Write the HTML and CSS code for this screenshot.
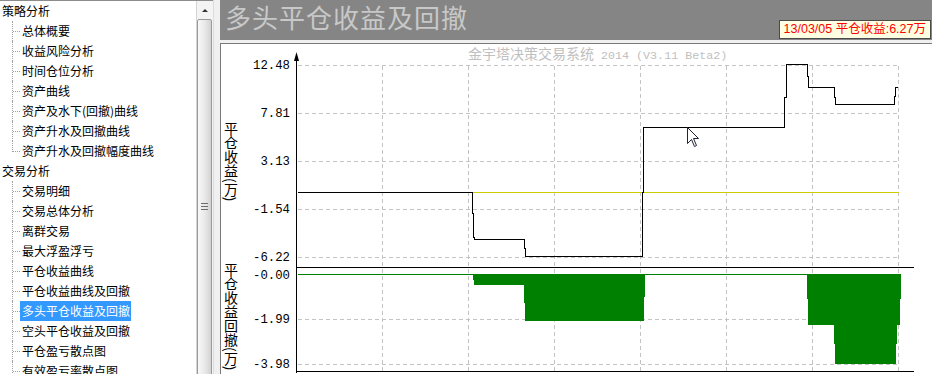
FILE: index.html
```html
<!DOCTYPE html>
<html lang="zh-CN">
<head>
  <meta charset="UTF-8">
  <title>多头平仓收益及回撤</title>
  <link rel="stylesheet" href="styles.css">
</head>
<body>

  <div class="app">
    <!-- Report tree -->
    <aside class="sidebar">
      <ul class="tree">
        <li class="group">策略分析</li>
        <li class="leaf"><span>总体概要</span></li>
        <li class="leaf"><span>收益风险分析</span></li>
        <li class="leaf"><span>时间仓位分析</span></li>
        <li class="leaf"><span>资产曲线</span></li>
        <li class="leaf"><span>资产及水下(回撤)曲线</span></li>
        <li class="leaf"><span>资产升水及回撤曲线</span></li>
        <li class="leaf last"><span>资产升水及回撤幅度曲线</span></li>
        <li class="group">交易分析</li>
        <li class="leaf"><span>交易明细</span></li>
        <li class="leaf"><span>交易总体分析</span></li>
        <li class="leaf"><span>离群交易</span></li>
        <li class="leaf"><span>最大浮盈浮亏</span></li>
        <li class="leaf"><span>平仓收益曲线</span></li>
        <li class="leaf"><span>平仓收益曲线及回撤</span></li>
        <li class="leaf active"><span>多头平仓收益及回撤</span></li>
        <li class="leaf"><span>空头平仓收益及回撤</span></li>
        <li class="leaf"><span>平仓盈亏散点图</span></li>
        <li class="leaf"><span>有效盈亏率散点图</span></li>
      </ul>
      <div class="scrollbar">
        <div class="scroll-up"></div>
        <div class="scroll-thumb"><span class="grip"></span></div>
      </div>
    </aside>

    <div class="splitter"></div>

    <!-- Report view -->
    <main class="report">
      <header class="report-title">
        <h1>多头平仓收益及回撤</h1>
        <div class="tip">13/03/05 平仓收益:6.27万</div>
      </header>

      <section class="chart-panel">
        <svg class="chart" width="711" height="330" viewBox="221 44 711 330">
          <text class="watermark" x="468" y="59">金宇塔决策交易系统<tspan class="latin"> 2014 (V3.11 Beta2)</tspan></text>

          <!-- grid -->
          <g transform="translate(.5 .5)">
            <path class="grid" d="M297 65H898M297 113H898M297 161H898M297 209H898M297 257H898M297 319H898M297 364H898"/>
            <path class="grid" d="M382 65V374M468 65V374M554 65V374M640 65V374M726 65V374M812 65V374M898 65V374"/>
          </g>

          <!-- drawdown fills -->
          <polygon class="dd" points="473,274 645,274 645,297 644,297 644,321 525,321 525,303 524,303 524,285 474,285 474,280 473,280"/>
          <polygon class="dd" points="807,274 901,274 901,299 900,299 900,325 897,325 897,344 896,344 896,364 835,364 835,344 834,344 834,325 808,325 808,299 807,299"/>

          <g transform="translate(.5 .5)">
            <path class="zero" d="M297 192H898"/>
            <path class="dd-line" d="M297 274H900"/>
            <path class="axis" d="M296 56V372M296 267H913M296 371H913"/>
            <path class="curve" d="M297 192H472V213H473V237H474V239H524V248H525V256H642V192H643V127H784V97H786V64H807V76H808V87H834V97H835V104H894V96H895V87H897"/>
          </g>
          <polygon points="296.5,52 294,61 299,61"/>

          <!-- tick labels -->
          <text class="tick" x="290" y="69">12.48</text>
          <text class="tick" x="290" y="117">7.81</text>
          <text class="tick" x="290" y="165">3.13</text>
          <text class="tick" x="290" y="213">-1.54</text>
          <text class="tick" x="290" y="261">-6.22</text>
          <text class="tick" x="290" y="279">-0.00</text>
          <text class="tick" x="290" y="323">-1.99</text>
          <text class="tick" x="290" y="368">-3.98</text>

          <text class="axis-title" x="231" y="122">平仓收益(万)</text>
          <text class="axis-title" x="231" y="263">平仓收益回撤(万)</text>

          <!-- mouse pointer -->
          <path class="pointer" transform="translate(687.5 127.5)" d="M0 0V16L4 12L7 19L9 18L6 11H11Z"/>
        </svg>
      </section>
    </main>
  </div>

</body>
</html>
```

FILE: styles.css
```css
body {
  margin: 0;
  background: #f0f0f0;
  font-family: "Noto Sans CJK SC", sans-serif;
}
.app {
  display: flex;
  width: 932px;
  height: 374px;
  overflow: hidden;
}

/* tree */
.sidebar {
  display: flex;
  width: 213px;
  border-top: 1px solid #8c8c8c;
  background: #fff;
  overflow: hidden;
}
.tree {
  list-style: none;
  margin: 0;
  padding: 0;
  width: 196px;
  font-size: 12px;
  line-height: 20px;
}
.tree li {
  height: 20px;
  white-space: nowrap;
}
.group {
  padding-left: 2px;
}
.leaf {
  display: flex;
  padding-left: 12px;
}
.leaf::before {
  content: '';
  width: 8px;
  box-sizing: border-box;
  border-left: 1px dotted #a0a0a0;
  background: linear-gradient(to right, #a0a0a0 50%, transparent 50%) 0 10px / 2px 1px repeat-x;
}
.leaf.last::before {
  height: 11px;
}
.leaf span {
  padding: 0 1px 0 2px;
}
.leaf.active span {
  background: #3399ff;
  color: #fff;
}

.scrollbar {
  width: 16px;
  border-left: 1px solid #d4d4d4;
  background: #f4f4f4;
  display: flex;
  flex-direction: column;
  overflow: hidden;
}
.scroll-up {
  flex: none;
  height: 18px;
  display: flex;
  align-items: center;
  justify-content: center;
}
.scroll-up::before {
  content: '';
  border-left: 3px solid transparent;
  border-right: 3px solid transparent;
  border-bottom: 3px solid #333;
}
.scroll-thumb {
  flex: none;
  height: 372px;
  margin-right: 1px;
  border: 1px solid #9a9a9a;
  border-radius: 2px;
  background: linear-gradient(to right, #f8f8f8, #e8e8e8 55%, #d2d2d2);
  display: flex;
  align-items: center;
  justify-content: center;
}
.grip {
  width: 7px;
  height: 7px;
  background: repeating-linear-gradient(to bottom, #6e6e6e 0 1px, transparent 1px 3px);
}

.splitter {
  width: 6px;
  border-left: 1px solid #dcdcdc;
}

/* report */
.report {
  flex: 1;
  display: flex;
  flex-direction: column;
}
.report-title {
  flex: none;
  height: 40px;
  background: #858585;
  display: flex;
  justify-content: space-between;
  padding-right: 1px;
}
.report-title h1 {
  margin: 0;
  padding-left: 5px;
  font-size: 26px;
  font-weight: normal;
  letter-spacing: 1px;
  line-height: 33px;
  color: #c8c8c8;
}
.tip {
  align-self: flex-end;
  margin-bottom: 1px;
  padding: 0 4px;
  border: 1px solid #4a4a4a;
  background: #ffffe1;
  color: #ff0000;
  font-family: "Liberation Sans", "Noto Sans CJK SC", sans-serif;
  font-size: 12.5px;
  line-height: 17px;
}

.chart-panel {
  flex: 1;
  margin-top: 3px;
  border-top: 1px solid #7a7a7a;
  border-left: 1px solid #7a7a7a;
  background: #fff;
  overflow: hidden;
}
.chart {
  display: block;
}
.grid {
  fill: none;
  stroke: #c4c4c4;
  stroke-dasharray: 4 3;
  shape-rendering: crispEdges;
}
.dd {
  fill: #008000;
  shape-rendering: crispEdges;
}
.dd-line {
  stroke: #008000;
  shape-rendering: crispEdges;
}
.zero {
  stroke: #cccc00;
  shape-rendering: crispEdges;
}
.axis,
.curve {
  fill: none;
  stroke: #000;
  shape-rendering: crispEdges;
}
.watermark {
  fill: #c0c0c0;
  font-size: 14px;
}
.watermark .latin {
  font-family: "Liberation Mono", monospace;
  font-size: 11.7px;
}
.tick {
  font-family: "Liberation Mono", monospace;
  font-size: 12.3px;
  text-anchor: end;
}
.axis-title {
  font-size: 14px;
  writing-mode: vertical-rl;
}
.pointer {
  fill: #fff;
  stroke: #22223a;
}
```
